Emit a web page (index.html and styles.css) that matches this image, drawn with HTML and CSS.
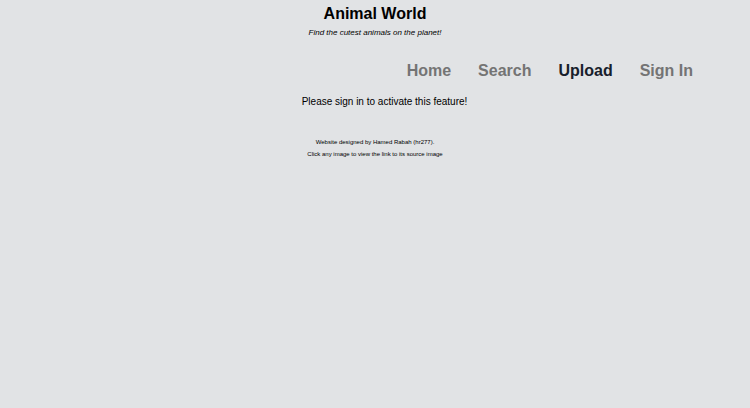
FILE: index.html
```
<!DOCTYPE html>
<html lang="en">
<head>
<meta charset="utf-8">
<title>Animal World</title>
<link rel="stylesheet" href="styles.css">
</head>
<body>
<header class="header">
<h1 class="title">Animal World</h1>
<p class="tagline">Find the cutest animals on the planet!</p>
</header>
<nav class="nav">
<a class="nav-link" href="#home">Home</a>
<a class="nav-link" href="#search">Search</a>
<a class="nav-link current" href="#upload" aria-current="page">Upload</a>
<a class="nav-link" href="#signin">Sign In</a>
</nav>
<main class="main">
<p class="message">Please sign in to activate this feature!</p>
</main>
<footer class="footer">
<p class="note">Website designed by Hamed Rabah (hr277).</p>
<p class="note">Click any image to view the link to its source image</p>
</footer>
</body>
</html>
```
FILE: styles.css
```
body {
  margin: 0;
  background: #e1e3e5;
  color: #000;
  font-family: "Liberation Sans", Arial, sans-serif;
  text-align: center;
}

.header {
  padding-top: 4px;
}

.title {
  margin: 0;
  font-size: 16px;
  line-height: 20px;
}

.tagline {
  margin: 4px 0 0;
  font-size: 8px;
  font-style: italic;
  line-height: 10px;
}

.nav {
  display: flex;
  justify-content: flex-end;
  gap: 27px;
  padding: 23px 57px 0 0;
}

.nav-link {
  color: #747474;
  font-size: 16px;
  font-weight: bold;
  line-height: 20px;
  text-decoration: none;
}

.nav-link.current {
  color: #17202b;
}

.main {
  padding: 14px 0 0 19px;
}

.message {
  margin: 0;
  font-size: 10px;
  line-height: 14px;
}

.footer {
  padding-top: 27px;
}

.note {
  margin: 0;
  font-size: 6px;
  line-height: 12px;
}
```
